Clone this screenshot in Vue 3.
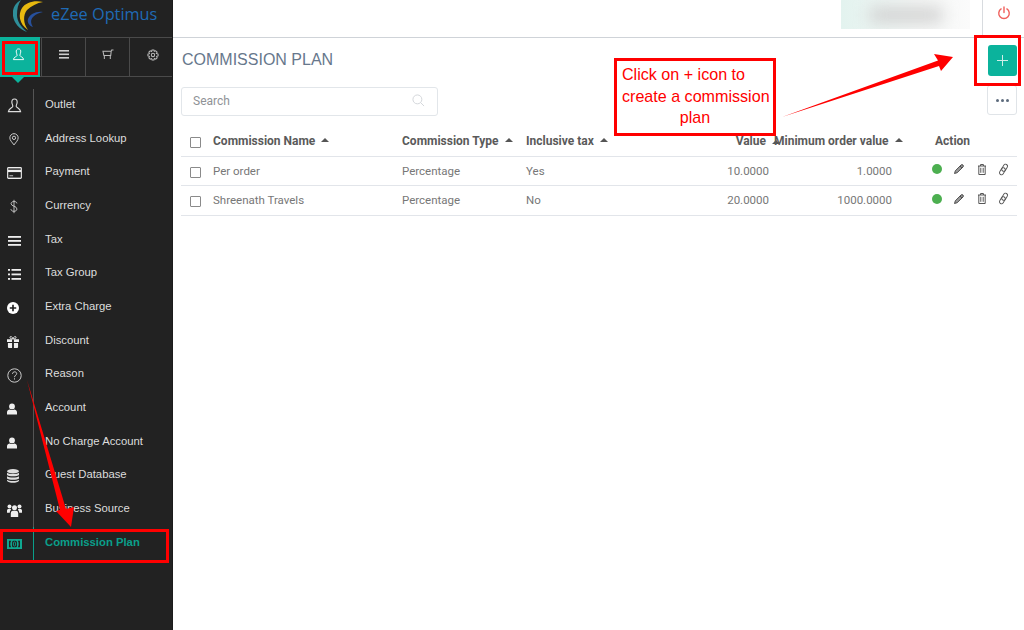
<script setup>
const menu = [
  ['Outlet', 'user'], ['Address Lookup', 'pin'], ['Payment', 'card'], ['Currency', 'dollar'],
  ['Tax', 'bars'], ['Tax Group', 'list'], ['Extra Charge', 'plus'], ['Discount', 'gift'],
  ['Reason', 'help'], ['Account', 'solid'], ['No Charge Account', 'solid'], ['Guest Database', 'db'],
  ['Business Source', 'group'], ['Commission Plan', 'money']
]
const rows = [
  { name: 'Per order', type: 'Percentage', tax: 'Yes', value: '10.0000', min: '1.0000' },
  { name: 'Shreenath Travels', type: 'Percentage', tax: 'No', value: '20.0000', min: '1000.0000' }
]
</script>

<template>
  <div class="app">
    <aside class="side">
      <div class="brand">
        <svg class="logo" width="36" height="33" viewBox="0 0 36 33">
          <path d="M8 0C2 3 -1 9 0 16C1 23 6 29 14 32C8 27 4 21 4 15C4 9 5 4 8 0Z" fill="#2f8f9a"/>
          <path d="M30 2C22 0 13 2 9 8C5 14 6 24 15 30C10 23 10 15 14 10C18 6 24 3 30 2Z" fill="#e8b90f"/>
          <path d="M30 12C23 11 17 14 15 19C14 22 16 26 20 27C18 24 17 20 20 17C23 14 26 13 30 12Z" fill="#27509c"/>
        </svg>
        <span class="brand-name">eZee Optimus</span>
      </div>
      <div class="tabs">
        <div class="tab on">
          <svg width="13" height="13" viewBox="0 0 14 14" fill="none" stroke="#fff" stroke-width="1"><path d="M7 1C5 1 4.400 2.600 4.600 4.400C4.700 5.800 5.500 6.800 5.500 8C5.500 9.300 1.500 9.800 1.500 12.500H12.500C12.500 9.800 8.500 9.300 8.500 8C8.500 6.800 9.300 5.800 9.400 4.400C9.600 2.600 9 1 7 1Z"/></svg>
        </div>
        <div class="tab">
          <svg width="10" height="9" viewBox="0 0 10 9" fill="#ccc"><rect y="0" width="10" height="1.600"/><rect y="3.500" width="10" height="1.600"/><rect y="7" width="10" height="1.600"/></svg>
        </div>
        <div class="tab">
          <svg width="12" height="11" viewBox="0 0 13 12" fill="none" stroke="#bbb" stroke-width="1.100"><path d="M1 2.500H10L9.500 7H2ZM10 2.500L10.500 1H12.500M2.500 7V11M9 7V11"/></svg>
        </div>
        <div class="tab">
          <svg width="12" height="12" viewBox="0 0 13 13" fill="none" stroke="#bbb" stroke-width="1.100"><circle cx="6.500" cy="6.500" r="1.800"/><path d="M5.500 1H7.500L7.900 2.500L9.300 1.900L10.900 3.400L10.100 4.800L12 5.500V7.500L10.400 8L11 9.600L9.500 11L8 10.300L7.500 12H5.500L5 10.400L3.500 11L2 9.500L2.700 8L1 7.500V5.500L2.700 5L2 3.500L3.500 2L5 2.700Z"/></svg>
        </div>
      </div>
      <span class="caret"></span>
      <ul class="menu">
        <li v-for="m in menu" :key="m[0]" class="item" :class="{ cur: m[1] === 'money' }">
          <span class="ico" :class="'i-' + m[1]">
            <svg v-if="m[1] === 'user'" width="15" height="15" viewBox="0 0 16 16" fill="none" stroke="#ddd" stroke-width="1.200"><path d="M8 1C5.800 1 5 2.800 5.200 4.800C5.300 6.400 6.200 7.400 6.200 8.800C6.200 10.400 2 10.800 1.500 14.500H14.500C14 10.800 9.800 10.400 9.800 8.800C9.800 7.400 10.700 6.400 10.800 4.800C11 2.800 10.200 1 8 1Z"/></svg>
            <svg v-else-if="m[1] === 'pin'" width="10" height="13" viewBox="0 0 12 15" fill="none" stroke="#ccc" stroke-width="1.200"><path d="M6 14C3.500 10.500 1 8.500 1 5.500A5 5 0 0 1 11 5.500C11 8.500 8.500 10.500 6 14Z"/><circle cx="6" cy="5.500" r="2"/></svg>
            <svg v-else-if="m[1] === 'card'" width="15" height="12" viewBox="0 0 16 13"><rect width="16" height="13" rx="1.500" fill="#eee"/><rect x="1.200" y="1.500" width="13.600" height="1.500" fill="#222"/><rect x="1.200" y="5.500" width="13.600" height="6" fill="#222"/><rect x="2.500" y="9" width="4" height="1" fill="#ccc"/></svg>
            <svg v-else-if="m[1] === 'dollar'" width="8" height="15" viewBox="0 0 9 16" fill="none" stroke="#ccc" stroke-width="1"><path d="M7.800 4.500C7.500 2.800 6 2.400 4.500 2.400C2.800 2.400 1.200 3.200 1.200 4.900C1.200 8 7.800 7.200 7.800 10.800C7.800 12.600 6.200 13.400 4.500 13.400C2.800 13.400 1.300 12.800 1 11M4.500 0.500V15.500"/></svg>
            <svg v-else-if="m[1] === 'bars'" width="13" height="10" viewBox="0 0 13 10" fill="#eee"><rect width="13" height="1.800"/><rect y="4" width="13" height="1.800"/><rect y="8" width="13" height="1.800"/></svg>
            <svg v-else-if="m[1] === 'list'" width="13" height="11" viewBox="0 0 13 11" fill="#eee"><rect width="2" height="1.800"/><rect x="3.500" width="9.500" height="1.800"/><rect y="4.500" width="2" height="1.800"/><rect x="3.500" y="4.500" width="9.500" height="1.800"/><rect y="9" width="2" height="1.800"/><rect x="3.500" y="9" width="9.500" height="1.800"/></svg>
            <svg v-else-if="m[1] === 'plus'" width="12" height="12" viewBox="0 0 13 13"><circle cx="6.500" cy="6.500" r="6.500" fill="#fff"/><path d="M3 6.500H10M6.500 3V10" stroke="#222" stroke-width="1.800"/></svg>
            <svg v-else-if="m[1] === 'gift'" width="12" height="12" viewBox="0 0 13 13" fill="#eee"><path d="M0 3.500H5.500V6.500H0ZM7.500 3.500H13V6.500H7.500ZM1 7.500H5.500V13H2A1 1 0 0 1 1 12ZM7.500 7.500H12V12A1 1 0 0 1 11 13H7.500Z"/><path d="M6.500 3.200C5 3.200 3.200 3 3.200 1.500C3.200 0 5.800 0.200 6.500 3.200C7.200 0.200 9.800 0 9.800 1.500C9.800 3 8 3.200 6.500 3.200Z" fill="none" stroke="#eee"/></svg>
            <svg v-else-if="m[1] === 'help'" width="15" height="15" viewBox="0 0 15 15" fill="none" stroke="#ccc"><circle cx="7.500" cy="7.500" r="6.700"/><path d="M5.500 5.800C5.500 3.200 9.700 3.200 9.700 5.600C9.700 7.200 7.500 7.300 7.500 9.200M7.500 10.300V11.500"/></svg>
            <svg v-else-if="m[1] === 'solid'" width="10" height="12" viewBox="0 0 11 12" fill="#eee"><circle cx="5.500" cy="3.200" r="3.200"/><path d="M0 12V9.500C0 7.500 1.800 6.500 3 6.500C4 7.300 7 7.300 8 6.500C9.200 6.500 11 7.500 11 9.500V12Z"/></svg>
            <svg v-else-if="m[1] === 'db'" width="12" height="14" viewBox="0 0 12 14" fill="#ddd"><ellipse cx="6" cy="2.200" rx="6" ry="2.200"/><path d="M0 3.800C1.500 5.500 10.500 5.500 12 3.800V6C10.500 7.700 1.500 7.700 0 6ZM0 7.300C1.500 9 10.500 9 12 7.300V9.400C10.500 11.100 1.500 11.100 0 9.400ZM0 10.700C1.500 12.400 10.500 12.400 12 10.700V11.800C10.500 14.500 1.500 14.500 0 11.800Z"/></svg>
            <svg v-else-if="m[1] === 'group'" width="15" height="13" viewBox="0 0 15 13" fill="#eee"><circle cx="7.500" cy="3.800" r="2.500"/><circle cx="2.500" cy="2.500" r="2"/><circle cx="12.500" cy="2.500" r="2"/><path d="M3.800 13V9.500C3.800 7.500 5 6.800 5.800 6.800H9.200C10 6.800 11.200 7.500 11.200 9.500V13ZM0 8.800V6.500C0 5.500 0.800 5 1.500 5H3.800L4 6C3.200 6.500 2.800 7.500 2.800 8.800ZM15 8.800V6.500C15 5.500 14.200 5 13.500 5H11.200L11 6C11.800 6.500 12.200 7.500 12.200 8.800Z"/></svg>
            <svg v-else width="15" height="10" viewBox="0 0 15 10"><rect width="15" height="10" fill="#0fa890"/><path d="M2 1.800H4.200C3 3.500 3 6.500 4.200 8.200H2ZM13 1.800H10.800C12 3.500 12 6.500 10.800 8.200H13Z" fill="#222"/><rect x="5" y="1.800" width="5" height="6.400" rx="1.500" fill="#222"/><ellipse cx="7.500" cy="5" rx="1.200" ry="2.100" fill="none" stroke="#0fa890" stroke-width="0.900"/></svg>
          </span>
          <span class="label">{{ m[0] }}</span>
        </li>
      </ul>
    </aside>

    <main class="main">
      <header class="top">
        <div class="blur"><i></i></div>
        <div class="power">
          <svg width="14" height="14" viewBox="0 0 16 16" fill="none" stroke="#f0605c" stroke-width="1.600" stroke-linecap="round"><path d="M8 1V7.500M4.700 3.300A6 6 0 1 0 11.300 3.300"/></svg>
        </div>
      </header>

      <div class="content">
        <div class="title-row">
          <h1>COMMISSION PLAN</h1>
          <button class="add">
            <svg width="11" height="11" viewBox="0 0 11 11" stroke="#cfeee8" stroke-width="1"><path d="M5.500 0V11M0 5.500H11"/></svg>
          </button>
        </div>
        <div class="tool-row">
          <div class="search">
            <span>Search</span>
            <svg width="13" height="13" viewBox="0 0 14 14" fill="none" stroke="#d0d4d8" stroke-width="1"><circle cx="5.800" cy="5.800" r="4.800"/><path d="M9.300 9.300L13 13"/></svg>
          </div>
          <button class="more"><i></i><i></i><i></i></button>
        </div>

        <div class="table">
          <div class="tr head">
            <div class="c-check"><span class="box"></span></div>
            <div class="c-name">Commission Name<b class="sort"></b></div>
            <div class="c-type">Commission Type<b class="sort"></b></div>
            <div class="c-tax">Inclusive tax<b class="sort"></b></div>
            <div class="c-val">Value<b class="sort"></b></div>
            <div class="c-min"><span class="nowrap">Minimum order value</span><b class="sort"></b></div>
            <div class="c-act">Action</div>
          </div>
          <div v-for="r in rows" :key="r.name" class="tr">
            <div class="c-check"><span class="box"></span></div>
            <div class="c-name">{{ r.name }}</div>
            <div class="c-type">{{ r.type }}</div>
            <div class="c-tax">{{ r.tax }}</div>
            <div class="c-val">{{ r.value }}</div>
            <div class="c-min num">{{ r.min }}</div>
            <div class="c-act icons">
              <span class="dot"></span>
              <svg width="10" height="10" viewBox="0 0 10 10" fill="none" stroke="#444" stroke-width="0.900"><path d="M0.500 9.500L1.300 6.800L7 1Q8 0.200 9 1Q9.800 2 9 3L3.200 8.700Z" fill="#999"/><path d="M6 2L8 4"/></svg>
              <svg width="8" height="11" viewBox="0 0 8 11" fill="none" stroke="#444" stroke-width="0.900"><path d="M0 2H8M2.600 2V0.500H5.400V2M0.800 2V10.500H7.200V2M2.800 3.800V8.800M5.200 3.800V8.800"/></svg>
              <svg class="link" width="9" height="11" viewBox="0 0 9 11" fill="none" stroke="#555" stroke-width="0.900"><rect x="3.600" y="0" width="4" height="7.500" rx="2" transform="rotate(30 5.600 3.800)"/><rect x="1.400" y="3.500" width="4" height="7.500" rx="2" transform="rotate(30 3.400 7.200)"/></svg>
            </div>
          </div>
        </div>
      </div>

      <div class="note">
        <div>Click on + icon to create a commission</div>
        <div class="note-last">plan</div>
      </div>
    </main>

    <!-- Annotation layer that lies over the page -->
    <div class="mark m-tab"></div>
    <div class="mark m-plan"></div>
    <div class="mark m-add"></div>
    <svg class="arrows" width="1024" height="630" viewBox="0 0 1024 630">
      <path d="M782 117L938 60.500L934 54L953 57L941 71L939 66Z" fill="#f00"/>
      <path d="M27 380L60 510L56 511L71 527L74 507L66 509Z" fill="#f00"/>
    </svg>
  </div>
</template>

<style>
html, body { margin: 0; background: #fff; }
</style>

<style scoped>
.app {
  position: relative;
  display: flex;
  width: 1024px;
  height: 630px;
  overflow: hidden;
  font-family: "Liberation Sans", Arial, sans-serif;
}
.side {
  position: relative;
  width: 173px;
  flex: none;
  background: #222;
  border-right: 1px solid #1b1b1b;
  box-sizing: border-box;
}
.brand {
  height: 37px;
  display: flex;
  align-items: center;
  padding-left: 13px;
  gap: 2px;
}
.logo { flex: none; margin-top: -4px; }
.brand-name {
  font: 16.300px "Open Sans", sans-serif;
  color: #1f6ab5;
  margin-top: -9px;
}
.tabs {
  display: grid;
  grid-template-columns: 42px 44px 44px 1fr;
  height: 40px;
  box-sizing: border-box;
  border-top: 1px solid #4a4a4a;
  border-bottom: 1px solid #4a4a4a;
}
.tab {
  display: flex;
  align-items: center;
  justify-content: center;
  border-right: 1px solid #4a4a4a;
  padding-bottom: 5px;
}
.tab:last-child { border-right: 0; padding-left: 3px; }
.tab.on {
  background: #0bb39c;
  border-right: 0;
  margin: -1px 2px -1px 0;
  padding-right: 3px;
}
.tab:nth-child(2) { border-left: 1px solid #4a4a4a; margin-left: -1px; }
.caret {
  position: absolute;
  left: 12px;
  top: 77px;
  border: 6px solid transparent;
  border-top-color: #0bb39c;
  border-bottom: 0;
}
.menu {
  list-style: none;
  margin: 0;
  padding: 12px 0 0;
}
.item {
  display: flex;
  align-items: center;
  height: 33.700px;
  font-size: 11.300px;
  color: #ddd;
}
.ico {
  width: 34px;
  height: 100%;
  flex: none;
  display: flex;
  align-items: center;
  justify-content: center;
  box-sizing: border-box;
  border-right: 1px solid #555;
  padding-right: 5px;
}
.i-solid { padding-right: 9px; }
.i-plus, .i-gift, .i-db { padding-right: 7px; }
.label { padding-left: 11px; padding-bottom: 4px; }
.cur { color: #0a9f8a; font-weight: 700; }
.cur .ico { border-right-color: #0a9f8a; }

.main { position: relative; flex: 1; min-width: 0; }
.top {
  height: 38px;
  box-sizing: border-box;
  border-bottom: 1px solid #cfd3d8;
  display: flex;
  justify-content: flex-end;
}
.blur {
  width: 129px;
  height: 29px;
  margin-right: 12px;
  background: linear-gradient(90deg, #e3f3ef, #f4f6f5 60%, #fbfbfb);
  display: flex;
  align-items: center;
  justify-content: center;
  overflow: hidden;
}
.blur i {
  width: 72px;
  height: 14px;
  background: #cfcfcf;
  filter: blur(8px);
}
.power {
  width: 42px;
  box-sizing: border-box;
  height: 37px;
  border-left: 1px solid #d8dbdf;
  display: flex;
  align-items: center;
  justify-content: center;
  padding-bottom: 11px;
}
.content { padding: 8px 7px 0 8px; }
.title-row {
  display: flex;
  justify-content: space-between;
  align-items: flex-start;
  height: 40px;
}
h1 {
  margin: 4px 0 0 1px;
  font-size: 16px;
  font-weight: 400;
  line-height: 20px;
  color: #67778c;
}
.add {
  width: 29px;
  height: 31px;
  margin-top: -1px;
  padding: 0;
  border: 0;
  border-radius: 3px;
  background: #0bb39c;
  display: flex;
  align-items: center;
  justify-content: center;
}
.tool-row {
  display: flex;
  justify-content: space-between;
  height: 32px;
}
.search {
  width: 257px;
  height: 29px;
  box-sizing: border-box;
  border: 1px solid #e2e6ea;
  border-radius: 3px;
  display: flex;
  align-items: center;
  justify-content: space-between;
  padding: 0 12px 2px 11px;
  font: 12px Roboto, sans-serif;
  color: #8f9296;
  margin-top: 1px;
}
.more {
  width: 30px;
  height: 30px;
  box-sizing: border-box;
  margin-top: -1px;
  padding: 0;
  border: 1px solid #e0e4e8;
  border-radius: 3px;
  background: #fff;
  display: flex;
  align-items: center;
  justify-content: center;
  gap: 2px;
}
.more i { width: 3px; height: 3px; border-radius: 50%; background: #5d6b7d; }

.table {
  margin-top: 8px;
  font: 11.500px Roboto, sans-serif;
  color: #777;
}
.tr {
  display: grid;
  grid-template-columns: 32px 189px 124px 120px 123px 123px 1fr;
  height: 29px;
  padding-bottom: 1px;
  align-items: center;
  box-sizing: border-box;
  border-bottom: 1px solid #e2e5ea;
}
.tr:last-child { height: 30px; }
.tr.head {
  height: 31px;
  font-size: 12px;
  font-weight: 700;
  color: #5a5a5a;
}
.c-check { display: flex; padding-left: 9px; }
.box {
  width: 9px;
  height: 9px;
  border: 1px solid #8a8a8a;
  border-radius: 1px;
  background: #fff;
  margin-top: 3px;
}
.c-val { text-align: right; position: relative; }
.c-min { white-space: nowrap; text-align: right; position: relative; }
.head .c-min { text-align: left; padding-left: 5px; }
.num { text-align: right; }
.nowrap { white-space: nowrap; }
.c-act { padding-left: 43px; }
.head .c-val { padding-right: 3px; }
.sort {
  display: inline-block;
  vertical-align: middle;
  margin-left: 6px;
  margin-top: -2px;
  border: 4px solid transparent;
  border-top: 0;
  border-bottom-color: #555;
}
.head .c-val .sort { position: absolute; right: -11px; top: 6px; margin: 0; }
.icons {
  display: flex;
  align-items: center;
  padding: 0 0 3px 40px;
}
.dot { width: 10px; height: 10px; border-radius: 50%; background: #4caf50; margin-right: 12px; }
.icons svg:nth-of-type(2) { margin-left: 14px; }
.icons svg:nth-of-type(3) { margin-left: 13px; }
.link { overflow: visible; }

.note {
  position: absolute;
  left: 441px;
  top: 58px;
  width: 162px;
  height: 78px;
  box-sizing: border-box;
  border: 3px solid #f00;
  padding: 3px 2px 3px 5px;
  background: #fff;
  color: #f00;
  font-size: 16.100px;
  line-height: 21.700px;
}
.note-last { text-align: center; padding-right: 3px; }
.mark {
  position: absolute;
  box-sizing: border-box;
  border: 3px solid #f00;
}
.m-tab { left: 2px; top: 41px; width: 36px; height: 34px; }
.m-plan { left: 0; top: 529px; width: 169px; height: 34px; }
.m-add { left: 974px; top: 35px; width: 47px; height: 51px; }
.arrows { position: absolute; left: 0; top: 0; pointer-events: none; }
</style>
